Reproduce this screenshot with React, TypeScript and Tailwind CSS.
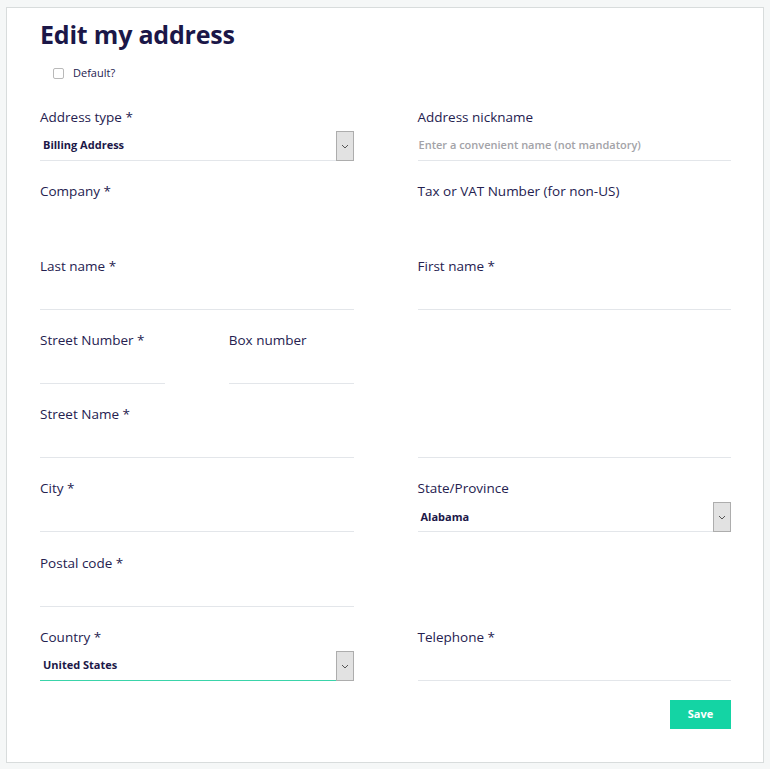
import React from "react";

const font = { fontFamily: '"Open Sans", "Liberation Sans", sans-serif' };

function Label({ children }: { children: React.ReactNode }) {
  return <div className="h-[20px] mb-[4px] text-[13.5px] leading-[20px] text-[#25214f]">{children}</div>;
}

function TextField({ label, line = true, placeholder }: { label?: string; line?: boolean; placeholder?: string }) {
  return (
    <div>
      <Label>{label ?? ""}</Label>
      <div className={`h-[30px] flex items-center px-[1px] ${line ? "border-b border-[#e3e6ea]" : ""}`}>
        {placeholder && <span className="text-[11px] font-semibold text-[#a3a3a8]">{placeholder}</span>}
      </div>
    </div>
  );
}

function Chevron() {
  return (
    <svg width="8" height="5" viewBox="0 0 8 5" fill="none">
      <path d="M1 1 L4 4 L7 1" stroke="#555" strokeWidth="1" />
    </svg>
  );
}

function SelectField({ label, value, focused = false }: { label: string; value: string; focused?: boolean }) {
  return (
    <div>
      <Label>{label}</Label>
      <div className="h-[30px] flex items-stretch">
        <div
          className={`flex-1 flex items-center pl-[3px] border-b ${focused ? "border-b-[#3ad4aa]" : "border-b-[#e3e6ea]"}`}
        >
          <span className="text-[11px] font-bold text-[#1c1848]">{value}</span>
        </div>
        <div className="w-[18px] bg-[#e2e2e2] border border-[#adadad] flex items-center justify-center">
          <Chevron />
        </div>
      </div>
    </div>
  );
}

export default function App() {
  return (
    <div className="min-h-screen bg-[#f5f7f7] pt-[7px] pl-[6px] pr-[6px] pb-[6px]" style={font}>
      <div className="w-[758px] h-[756px] bg-white border border-[#d8dcdc] pl-[33px] pr-[32px] pt-[9px]">
        <h1 className="text-[25px] leading-[34px] font-bold text-[#1b1748] tracking-[-0.2px]">Edit my address</h1>
        <label className="flex items-center gap-[9px] ml-[13px] mt-[12px] h-[20px]">
          <span className="w-[11px] h-[11px] border border-[#b9b9b9] rounded-[2px] bg-white" />
          <span className="text-[11px] text-[#25214f]">Default?</span>
        </label>

        <div className="grid grid-cols-2 gap-x-[64px] gap-y-[20.3px] mt-[24px]">
          <SelectField label="Address type *" value="Billing Address" />
          <TextField label="Address nickname" placeholder="Enter a convenient name (not mandatory)" />

          <TextField label="Company *" line={false} />
          <TextField label="Tax or VAT Number (for non-US)" line={false} />

          <TextField label="Last name *" />
          <TextField label="First name *" />

          <div className="grid grid-cols-2 gap-x-[64px]">
            <TextField label="Street Number *" />
            <TextField label="Box number" />
          </div>
          <div />

          <TextField label="Street Name *" />
          <TextField />

          <TextField label="City *" />
          <SelectField label="State/Province" value="Alabama" />

          <TextField label="Postal code *" />
          <div />

          <SelectField label="Country *" value="United States" focused />
          <TextField label="Telephone *" />
        </div>

        <div className="flex justify-end mt-[19px]">
          <button className="w-[61px] h-[29px] bg-[#14d4a4] text-white text-[11px] font-bold">Save</button>
        </div>
      </div>
    </div>
  );
}
